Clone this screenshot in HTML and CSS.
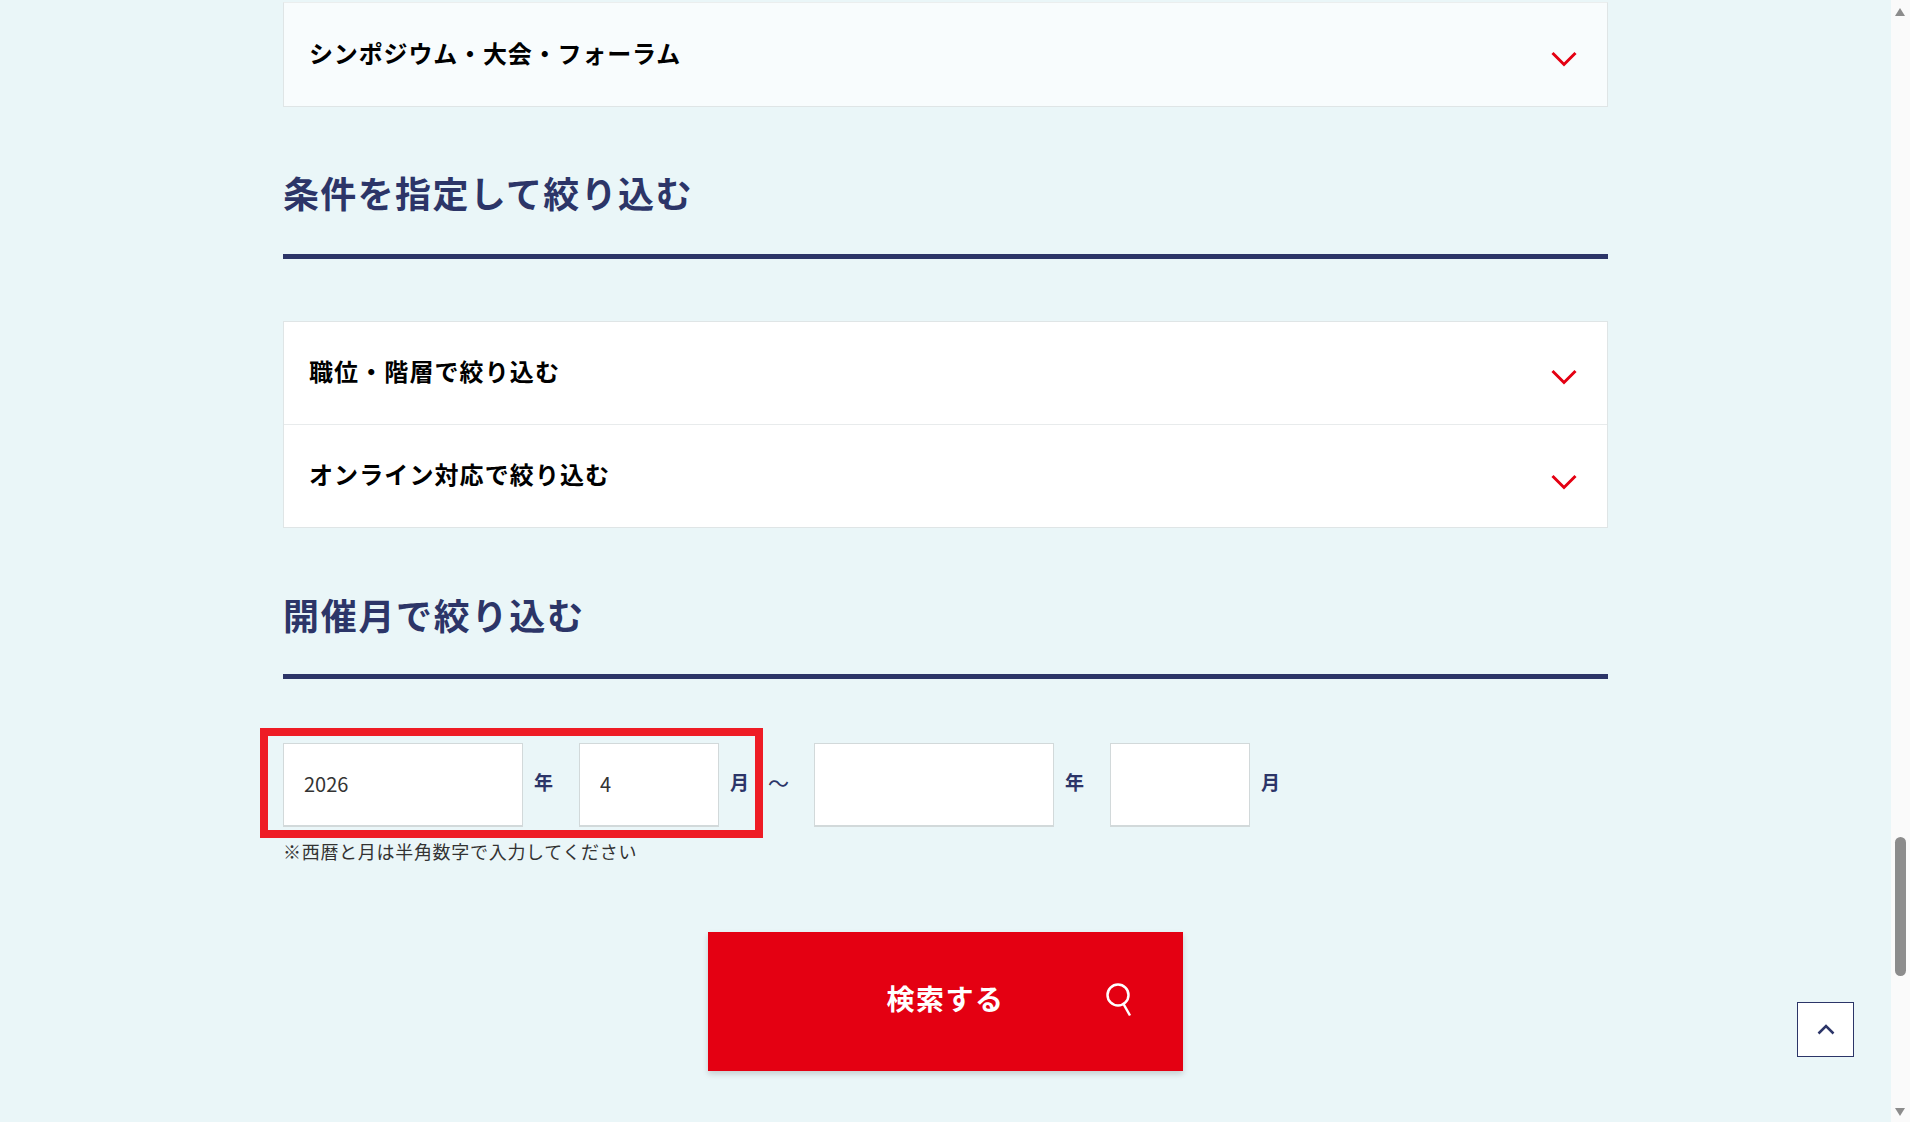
FILE: index.html
```html
<!DOCTYPE html>
<html lang="ja">
<head>
<meta charset="utf-8">
<title>検索</title>
<link rel="stylesheet" href="styles.css">
</head>
<body>
<div class="shell">
  <main class="page">
    <div class="container">
      <div class="panel panel-faded">
        <div class="row row-tight"><span>シンポジウム・大会・フォーラム</span><svg class="chev" viewBox="0 0 26 16"><path d="M1.5 2 13 13.5 24.500 2"/></svg></div>
      </div>
      <h2 class="heading heading-first">条件を指定して絞り込む</h2>
      <div class="panel panel-white">
        <div class="row row-line"><span>職位・階層で絞り込む</span><svg class="chev" viewBox="0 0 26 16"><path d="M1.5 2 13 13.5 24.500 2"/></svg></div>
        <div class="row row-last"><span>オンライン対応で絞り込む</span><svg class="chev" viewBox="0 0 26 16"><path d="M1.5 2 13 13.5 24.500 2"/></svg></div>
      </div>
      <h2 class="heading heading-second">開催月で絞り込む</h2>
      <div class="dates">
        <input class="field field-year" type="text" value="2026" aria-label="開始年">
        <span class="unit unit-year">年</span>
        <input class="field field-month" type="text" value="4" aria-label="開始月">
        <span class="unit unit-month">月</span>
        <span class="tilde">～</span>
        <input class="field field-year" type="text" aria-label="終了年">
        <span class="unit unit-year">年</span>
        <input class="field field-month" type="text" aria-label="終了月">
        <span class="unit unit-month">月</span>
        <div class="highlight"></div>
      </div>
      <p class="note">※西暦と月は半角数字で入力してください</p>
      <div class="actions">
        <button class="search" type="button">
          <span>検索する</span>
          <svg class="search-icon" viewBox="0 0 26 34"><circle cx="12" cy="12" r="10.500"/><path d="M17.500 21 24 32.500"/></svg>
        </button>
      </div>
    </div>
    <button class="totop" type="button" aria-label="ページ上部へ"><svg viewBox="0 0 18 11"><path d="M1.500 9.500 9 2l7.500 7.500"/></svg></button>
  </main>
  <aside class="scrollbar">
    <svg class="arrow arrow-up" viewBox="0 0 10 8"><path d="M5 0 10 8H0z"/></svg>
    <div class="thumb"></div>
    <svg class="arrow arrow-down" viewBox="0 0 10 8"><path d="M0 0H10L5 8z"/></svg>
  </aside>
</div>
</body>
</html>
```
FILE: styles.css
```css
* { box-sizing: border-box; }
html, body { margin: 0; height: 100%; overflow: hidden; }
body {
  background: #eaf6f8;
  font-family: "Noto Sans CJK JP", "Noto Sans", sans-serif;
  color: #000;
}
.shell { display: flex; height: 1122px; }
.page { flex: 1; position: relative; min-width: 0; padding-top: 2px; }
.container { width: 1325px; margin: 0 auto; }

.panel { border: 1px solid #dfe5e6; }
.panel-faded { background: #f8fcfd; border-top-color: #ebeeee; }
.panel-white { background: #fff; }
.row {
  height: 103px;
  display: flex;
  align-items: center;
  justify-content: space-between;
  padding: 0 30px 0 25px;
  font-size: 24px;
  font-weight: 700;
  letter-spacing: 1.100px;
  line-height: 1;
}
.row span { position: relative; top: -2px; }
.row-tight { letter-spacing: 0.850px; }
.row-line { border-bottom: 1px solid #e8ebec; }
.row-last { height: 102px; }
.chev { width: 26px; height: 16px; position: relative; top: 4px; }
.row-last .chev { top: 6px; }
.chev path { fill: none; stroke: #e40012; stroke-width: 3; }

.heading {
  margin: 0;
  color: #2c3568;
  font-size: 36px;
  font-weight: 700;
  letter-spacing: 1.350px;
  line-height: 52px;
  border-bottom: 5px solid #2c3568;
}
.heading-first { padding: 59px 0 36px; margin-bottom: 62px; }
.heading-second { padding: 60px 0 34px; margin-bottom: 64px; letter-spacing: 1.700px; }

.dates { display: flex; align-items: center; position: relative; height: 84px; }
.field {
  height: 84px;
  border: 1px solid #d2d9da;
  border-bottom-width: 2px;
  background: #fff;
  padding: 0 20px 3px;
  font: 400 20px "Noto Sans CJK JP", sans-serif;
  color: #333;
  outline: none;
}
.field-year { width: 240px; }
.field-month { width: 140px; }
.unit {
  color: #2c3568;
  font-size: 19px;
  font-weight: 700;
  line-height: 1;
  position: relative;
  top: -4px;
}
.unit-year { width: 56px; padding-left: 11px; }
.unit-month { width: 40px; padding-left: 11px; }
.tilde {
  width: 55px;
  padding-left: 9px;
  color: #2c3568;
  font-size: 21px;
  line-height: 1;
  position: relative;
  top: -3px;
}
.highlight {
  position: absolute;
  left: -23px;
  top: -15px;
  width: 503px;
  height: 110px;
  border: 8px solid #ee1c25;
  pointer-events: none;
}
.note {
  margin: 11px 0 0;
  font-size: 18px;
  line-height: 27px;
  color: #333;
  letter-spacing: 0.700px;
}

.actions { display: flex; justify-content: center; margin-top: 67px; }
.search {
  position: relative;
  width: 475px;
  height: 139px;
  border: 0;
  background: #e40012;
  color: #fff;
  font: 700 28px "Noto Sans CJK JP", sans-serif;
  letter-spacing: 1.500px;
  box-shadow: 0 3px 6px rgba(0, 0, 0, 0.16);
  display: flex;
  align-items: center;
  justify-content: center;
  padding: 0 0 7px;
}
.search-icon {
  position: absolute;
  left: 398px;
  top: 51px;
  width: 26px;
  height: 34px;
}
.search-icon circle, .search-icon path { fill: none; stroke: #fff; stroke-width: 2.500; }

.totop {
  position: absolute;
  left: 1797px;
  top: 1002px;
  width: 57px;
  height: 55px;
  border: 1px solid #2c3568;
  background: #fff;
  display: flex;
  align-items: center;
  justify-content: center;
  padding: 0;
}
.totop svg { width: 18px; height: 11px; }
.totop path { fill: none; stroke: #2c3568; stroke-width: 2.500; }

.scrollbar { width: 19px; background: #fafafa; position: relative; flex: none; }
.thumb {
  position: absolute;
  left: 4px;
  top: 837px;
  width: 11px;
  height: 139px;
  border-radius: 6px;
  background: #8c8c8c;
}
.arrow { position: absolute; left: 4px; width: 10px; height: 8px; fill: #8c8c8c; }
.arrow-up { top: 8px; }
.arrow-down { top: 1108px; }
```
